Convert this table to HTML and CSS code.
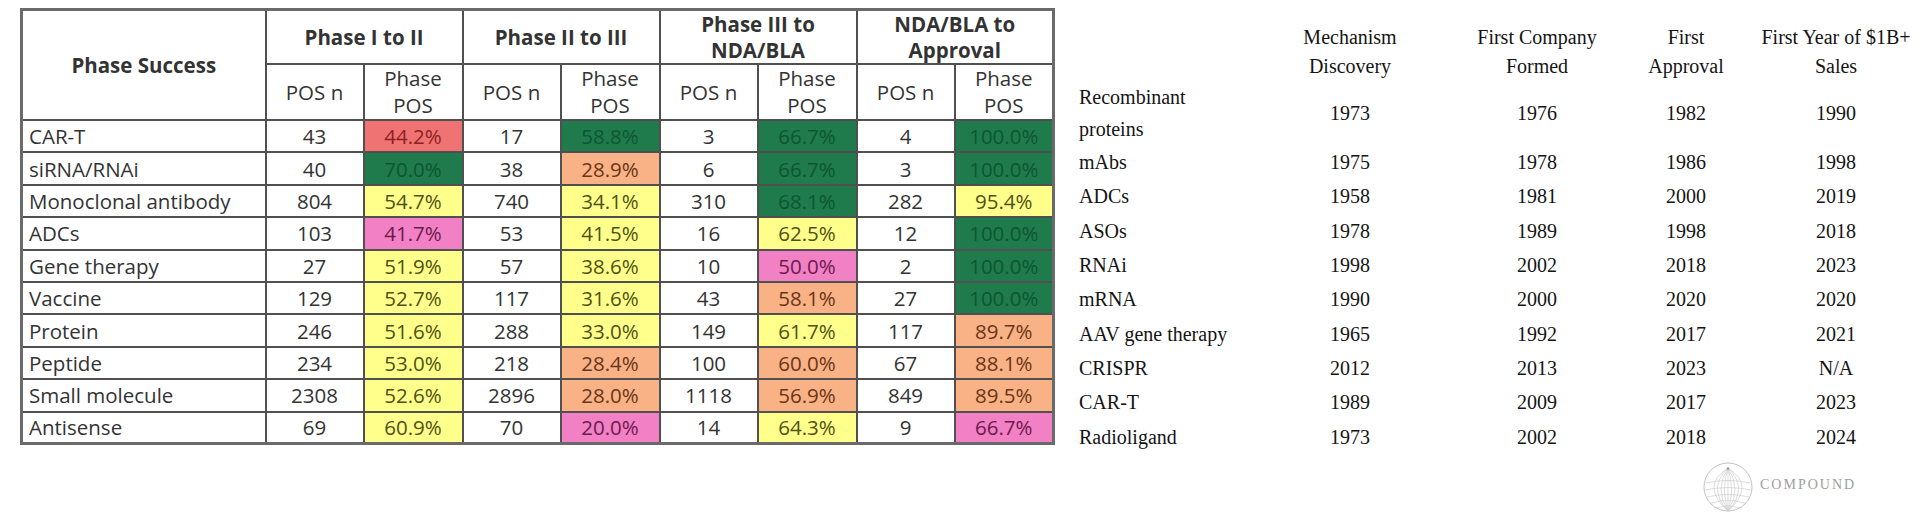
FILE: index.html
```html
<!DOCTYPE html>
<html lang="en">
<head>
<meta charset="utf-8">
<title>Phase success and modality timeline</title>
<link rel="stylesheet" href="styles.css">
</head>
<body>
<div class="page">
  <div class="pos-wrap">
    <table class="pos">
      <colgroup>
        <col class="c-label">
        <col class="c-n"><col class="c-p">
        <col class="c-n"><col class="c-p">
        <col class="c-n"><col class="c-p">
        <col class="c-n"><col class="c-p">
      </colgroup>
      <thead>
        <tr class="h1">
          <th rowspan="2" class="ps">Phase Success</th>
          <th colspan="2">Phase I to II</th>
          <th colspan="2">Phase II to III</th>
          <th colspan="2">Phase III to<br>NDA/BLA</th>
          <th colspan="2">NDA/BLA to<br>Approval</th>
        </tr>
        <tr class="h2">
          <th>POS n</th><th>Phase<br>POS</th>
          <th>POS n</th><th>Phase<br>POS</th>
          <th>POS n</th><th>Phase<br>POS</th>
          <th>POS n</th><th>Phase<br>POS</th>
        </tr>
      </thead>
      <tbody>
        <tr><td class="lbl">CAR-T</td><td>43</td><td class="r">44.2%</td><td>17</td><td class="g">58.8%</td><td>3</td><td class="g">66.7%</td><td>4</td><td class="g">100.0%</td></tr>
        <tr><td class="lbl">siRNA/RNAi</td><td>40</td><td class="g">70.0%</td><td>38</td><td class="o">28.9%</td><td>6</td><td class="g">66.7%</td><td>3</td><td class="g">100.0%</td></tr>
        <tr><td class="lbl">Monoclonal antibody</td><td>804</td><td class="y">54.7%</td><td>740</td><td class="y">34.1%</td><td>310</td><td class="g">68.1%</td><td>282</td><td class="y">95.4%</td></tr>
        <tr><td class="lbl">ADCs</td><td>103</td><td class="p">41.7%</td><td>53</td><td class="y">41.5%</td><td>16</td><td class="y">62.5%</td><td>12</td><td class="g">100.0%</td></tr>
        <tr><td class="lbl">Gene therapy</td><td>27</td><td class="y">51.9%</td><td>57</td><td class="y">38.6%</td><td>10</td><td class="p">50.0%</td><td>2</td><td class="g">100.0%</td></tr>
        <tr><td class="lbl">Vaccine</td><td>129</td><td class="y">52.7%</td><td>117</td><td class="y">31.6%</td><td>43</td><td class="o">58.1%</td><td>27</td><td class="g">100.0%</td></tr>
        <tr><td class="lbl">Protein</td><td>246</td><td class="y">51.6%</td><td>288</td><td class="y">33.0%</td><td>149</td><td class="y">61.7%</td><td>117</td><td class="o">89.7%</td></tr>
        <tr><td class="lbl">Peptide</td><td>234</td><td class="y">53.0%</td><td>218</td><td class="o">28.4%</td><td>100</td><td class="o">60.0%</td><td>67</td><td class="o">88.1%</td></tr>
        <tr><td class="lbl">Small molecule</td><td>2308</td><td class="y">52.6%</td><td>2896</td><td class="o">28.0%</td><td>1118</td><td class="o">56.9%</td><td>849</td><td class="o">89.5%</td></tr>
        <tr><td class="lbl">Antisense</td><td>69</td><td class="y">60.9%</td><td>70</td><td class="p">20.0%</td><td>14</td><td class="y">64.3%</td><td>9</td><td class="p">66.7%</td></tr>
      </tbody>
    </table>
  </div>

  <div class="timeline">
    <div class="tgrid">
      <div class="th"></div>
      <div class="th">Mechanism<br>Discovery</div>
      <div class="th">First Company<br>Formed</div>
      <div class="th">First<br>Approval</div>
      <div class="th">First Year of $1B+<br>Sales</div>

      <div class="tl">Recombinant<br>proteins</div><div class="tv">1973</div><div class="tv">1976</div><div class="tv">1982</div><div class="tv">1990</div>
      <div class="tl">mAbs</div><div class="tv">1975</div><div class="tv">1978</div><div class="tv">1986</div><div class="tv">1998</div>
      <div class="tl">ADCs</div><div class="tv">1958</div><div class="tv">1981</div><div class="tv">2000</div><div class="tv">2019</div>
      <div class="tl">ASOs</div><div class="tv">1978</div><div class="tv">1989</div><div class="tv">1998</div><div class="tv">2018</div>
      <div class="tl">RNAi</div><div class="tv">1998</div><div class="tv">2002</div><div class="tv">2018</div><div class="tv">2023</div>
      <div class="tl">mRNA</div><div class="tv">1990</div><div class="tv">2000</div><div class="tv">2020</div><div class="tv">2020</div>
      <div class="tl">AAV gene therapy</div><div class="tv">1965</div><div class="tv">1992</div><div class="tv">2017</div><div class="tv">2021</div>
      <div class="tl">CRISPR</div><div class="tv">2012</div><div class="tv">2013</div><div class="tv">2023</div><div class="tv">N/A</div>
      <div class="tl">CAR-T</div><div class="tv">1989</div><div class="tv">2009</div><div class="tv">2017</div><div class="tv">2023</div>
      <div class="tl">Radioligand</div><div class="tv">1973</div><div class="tv">2002</div><div class="tv">2018</div><div class="tv">2024</div>
    </div>

    <div class="brand">
      <svg class="globe" width="50" height="50" viewBox="0 0 50 50" aria-hidden="true">
        <circle cx="25" cy="25" r="24" fill="none" stroke="#c4c4c4" stroke-width="1"/>
        <g fill="none" stroke="#cdcdcd" stroke-width="0.7">
          <path d="M25 6 Q-3 24 25 49"/>
          <path d="M25 6 Q4 26 25 49"/>
          <path d="M25 6 Q11 27 25 49"/>
          <path d="M25 6 Q18 28 25 49"/>
          <path d="M25 6 V49"/>
          <path d="M25 6 Q32 28 25 49"/>
          <path d="M25 6 Q39 27 25 49"/>
          <path d="M25 6 Q46 26 25 49"/>
          <path d="M25 6 Q53 24 25 49"/>
          <path d="M3 21 Q25 16 47 21"/>
          <path d="M2 28 Q25 23 48 28"/>
          <path d="M4 35 Q25 30 46 35"/>
          <path d="M8 41 Q25 36 42 41"/>
          <path d="M14 46 Q25 42 36 46"/>
        </g>
        <circle cx="25" cy="6.5" r="1.3" fill="#9a9a9a"/>
      </svg>
      <span class="brand-name">COMPOUND</span>
    </div>
  </div>
</div>
</body>
</html>
```

FILE: styles.css
```css
html, body {
  margin: 0;
  padding: 0;
  background: #ffffff;
}

.page {
  display: flex;
  align-items: flex-start;
  width: 1928px;
  height: 514px;
  overflow: hidden;
}

/* ---------- left: phase success table ---------- */
.pos-wrap {
  padding: 8px 0 0 20px;
}

.pos {
  border-collapse: collapse;
  table-layout: fixed;
  width: 1032px;
  font-family: "Open Sans", "Noto Sans", sans-serif;
  font-size: 20.5px;
  color: #333333;
  border: 3px solid #6a6a6a;
}

.c-label { width: 244px; }
.c-n { width: 98px; }
.c-p { width: 99px; }

.pos th,
.pos td {
  border: 2px solid #505050;
  padding: 0;
  text-align: center;
  vertical-align: middle;
}

.pos thead th {
  font-weight: 700;
  line-height: 26px;
  background: #ffffff;
}

.pos .h1 { height: 54px; }
.pos .h2 { height: 54px; }
.pos .h2 th {
  font-weight: 400;
  line-height: 27px;
}

.pos tbody tr { height: 32.4px; }
.pos tbody td { line-height: 26px; }

.pos td.lbl {
  text-align: left;
  padding-left: 6px;
}

.pos td.r { background: #f07373; color: #8e1f1f; }
.pos td.g { background: #1f7b4b; color: #0e5630; }
.pos td.y { background: #ffff8c; color: #4f5214; }
.pos td.o { background: #f8b285; color: #6a3518; }
.pos td.p { background: #f280c4; color: #6c1b4c; }

/* ---------- right: timeline table ---------- */
.timeline {
  margin-left: 24px;
  padding-top: 23px;
  display: flex;
  flex-direction: column;
}

.tgrid {
  display: grid;
  grid-template-columns: 168px 206px 168px 130px 170px;
  grid-template-rows: 58px 64px repeat(9, 34.3px);
  align-items: center;
  font-family: "Liberation Serif", "Times New Roman", serif;
  font-size: 20px;
  color: #141414;
}

.th {
  text-align: center;
  line-height: 29px;
}

.tl {
  text-align: left;
  line-height: 32px;
}

.tv {
  text-align: center;
  line-height: 32px;
}

.brand {
  display: flex;
  align-items: center;
  gap: 7px;
  margin-left: 624px;
  margin-top: 8px;
}

.globe { display: block; }

.brand-name {
  font-family: "Liberation Serif", "Times New Roman", serif;
  font-size: 14px;
  letter-spacing: 2px;
  color: #9d9d9d;
  margin-top: -4px;
}
```
